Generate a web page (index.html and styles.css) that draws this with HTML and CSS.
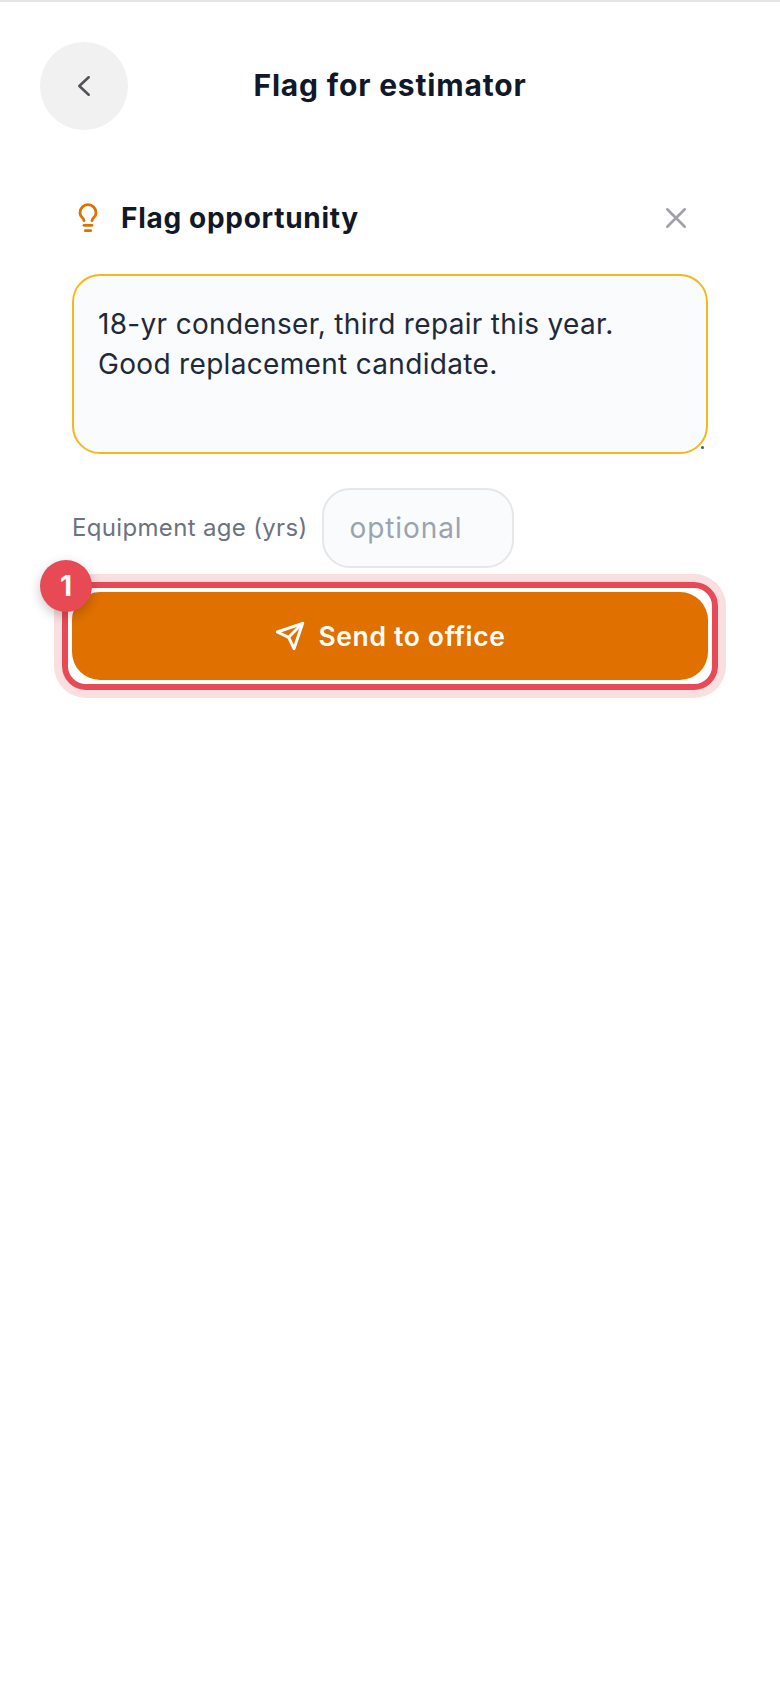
FILE: index.html
```html
<!DOCTYPE html>
<html lang="en">
<head>
<meta charset="utf-8">
<title>Flag for estimator</title>
<link rel="stylesheet" href="styles.css">
</head>
<body>
<div class="page">
  <header class="header">
    <button class="back" aria-label="Back">
      <svg class="back-icon" viewBox="0 0 24 24"><path d="M16 4.5 8 12l8 7.5"/></svg>
    </button>
    <h1 class="title">Flag for estimator</h1>
  </header>
  <main class="content">
    <div class="flag-head">
      <svg class="bulb" viewBox="0 0 24 24"><path d="M15 14c.2-1 .7-1.7 1.5-2.5 1-.9 1.5-2.2 1.5-3.5A6 6 0 0 0 6 8c0 1 .2 2.2 1.5 3.5.7.7 1.3 1.5 1.5 2.5"/><path d="M9 17.5h6"/><path d="M10 21.5h4"/></svg>
      <h2 class="flag-title">Flag opportunity</h2>
      <svg class="close" viewBox="0 0 24 24"><path d="M4.5 4.5l15 15M19.5 4.5l-15 15"/></svg>
    </div>
    <div class="note">
      <div class="note-text">18-yr condenser, third repair this year.<br>Good replacement candidate.</div>
      <span class="grip"></span>
    </div>
    <div class="age-row">
      <span class="age-label">Equipment age (yrs)</span>
      <div class="age-input">optional</div>
    </div>
    <div class="send-wrap">
      <span class="ring"></span>
      <button class="send">
        <svg class="send-icon" viewBox="0 0 24 24"><path d="M21.5 2.5 15 21.5l-4-8.5-8.5-4z"/><path d="M21.5 2.5 11 13"/></svg>
        <span>Send to office</span>
      </button>
      <span class="badge">1</span>
    </div>
  </main>
</div>
</body>
</html>
```
FILE: styles.css
```css
* { box-sizing: border-box; }
html, body { margin: 0; padding: 0; background: #fff; }
body { font-family: Inter, "Liberation Sans", sans-serif; color: #111827; }
.page { width: 780px; height: 1688px; border-top: 2px solid #e5e5e5; overflow: hidden; }
.header { position: relative; display: flex; align-items: center; justify-content: center; height: 88px; margin-top: 40px; }
.back { position: absolute; left: 40px; top: 0; width: 88px; height: 88px; border: 0; border-radius: 50%; background: #f1f1f2; padding: 0; display: flex; align-items: center; justify-content: center; }
.back-icon { width: 28px; height: 28px; fill: none; stroke: #52525b; stroke-width: 2.2; stroke-linecap: round; stroke-linejoin: round; }
.title { margin: 0 0 2px; font-size: 30px; line-height: 40px; font-weight: 700; letter-spacing: .83px; color: #111827; }
.content { padding: 0 72px; }
.flag-head { display: flex; align-items: center; height: 40px; margin-top: 68px; }
.bulb { width: 32px; height: 32px; fill: none; stroke: #e07000; stroke-width: 2.1; stroke-linecap: round; stroke-linejoin: round; margin-right: 17px; }
.flag-title { margin: 0; flex: 1; font-size: 28px; line-height: 40px; font-weight: 700; letter-spacing: .7px; color: #111827; }
.close { width: 28px; height: 28px; margin-right: 18px; fill: none; stroke: #a1a1aa; stroke-width: 2.2; stroke-linecap: round; }
.note { position: relative; height: 180px; margin-top: 36px; padding: 28px 24px; background: #f9fbfd; border: 2px solid #f5b81c; border-radius: 28px; }
.note-text { font-size: 28px; line-height: 40px; letter-spacing: .32px; color: #1f2937; }
.grip { position: absolute; right: 2px; bottom: 3px; width: 3px; height: 3px; border-radius: 50%; background: #4b5563; }
.age-row { display: flex; align-items: center; gap: 14px; margin-top: 34px; }
.age-label { font-size: 24px; line-height: 32px; letter-spacing: .33px; color: #6b7280; }
.age-input { width: 192px; height: 80px; padding: 0 26px; display: flex; align-items: center; background: #f9fbfd; border: 2px solid #e5e7eb; border-radius: 28px; font-size: 28px; letter-spacing: .9px; color: #9ca3af; }
.send-wrap { position: relative; margin-top: 24px; }
.ring { position: absolute; inset: -10px; border: 6px solid #e84a55; border-radius: 24px; box-shadow: 0 0 0 8px #fadfe1; }
.send { position: relative; width: 100%; height: 88px; border: 0; border-radius: 28px; background: #e07000; color: #fff; display: flex; align-items: center; justify-content: center; gap: 12px; font-family: inherit; font-size: 26.5px; font-weight: 600; letter-spacing: .65px; }
.send-icon { width: 32px; height: 32px; fill: none; stroke: #fff; stroke-width: 2.2; stroke-linecap: round; stroke-linejoin: round; }
.badge { position: absolute; left: -32px; top: -32px; width: 52px; height: 52px; border-radius: 50%; background: #e84a55; color: #fff; display: flex; align-items: center; justify-content: center; font-size: 28px; font-weight: 700; box-shadow: 0 4px 12px rgba(0, 0, 0, .22); }
```
